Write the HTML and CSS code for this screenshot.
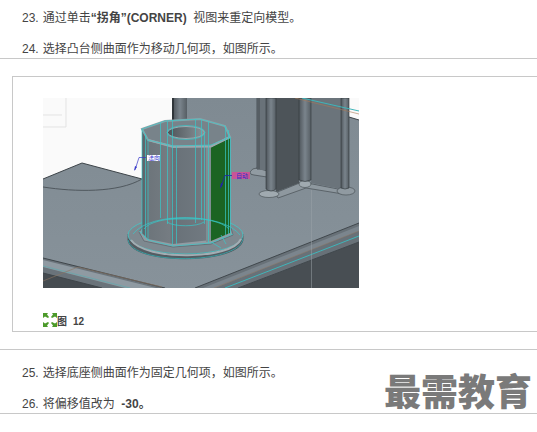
FILE: index.html
```
<!DOCTYPE html>
<html lang="zh-CN">
<head>
  <meta charset="UTF-8">
  <meta name="viewport" content="width=device-width, initial-scale=1">
  <title>重定向模型</title>
  <link rel="stylesheet" href="styles.css">
</head>
<body>
  <main>
    <ol class="steps" start="23">
      <li><span class="num">23.</span><p>通过单击<b>“拐角”(CORNER)</b>&nbsp; 视图来重定向模型。</p></li>
      <li><span class="num">24.</span><p>选择凸台侧曲面作为移动几何项，如图所示。</p></li>
    </ol>

    <figure class="figure">
      <svg class="model" viewBox="43 98 316 190" role="img" aria-label="凸台侧曲面">
        <defs>
          <linearGradient id="tube">
            <stop offset="0" stop-color="#4f565c"/>
            <stop offset=".5" stop-color="#7a848c"/>
            <stop offset="1" stop-color="#565e64"/>
          </linearGradient>
          <linearGradient id="boss">
            <stop offset="0" stop-color="#596167"/>
            <stop offset=".1" stop-color="#6d757b"/>
            <stop offset=".4" stop-color="#757c82"/>
            <stop offset=".45" stop-color="#697178"/>
            <stop offset="1" stop-color="#727b82"/>
          </linearGradient>
          <linearGradient id="hole">
            <stop offset="0" stop-color="#4c5358"/>
            <stop offset="1" stop-color="#8b949a"/>
          </linearGradient>
          <linearGradient id="top" x1="0" y1="0" x2="0" y2="1">
            <stop offset="0" stop-color="#7f8a92"/>
            <stop offset="1" stop-color="#87929a"/>
          </linearGradient>
        </defs>
        <rect x="43" y="98" width="316" height="190" fill="#fafafa"/>
        <path d="M66 98V127H43M43 115H62" fill="none" stroke="#e3e3e3"/>

        <!-- plate and back wall -->
        <path d="M43 179L82 163L142 179L173 180V98H349V117L359 120V288H43Z" fill="url(#top)"/>
        <path d="M43 179L82 163L142 179M349 117L359 120" fill="none" stroke="#3d4449"/>
        <path d="M43 187C75 192 118 193 142 179" fill="none" stroke="#50585e"/>
        <rect x="173" y="98" width="14" height="28" fill="url(#tube)"/>
        <path d="M173 98V126" stroke="#30363a" stroke-width="2"/>

        <!-- front edges -->
        <path d="M43 258L165 288H43Z" fill="#6a737a"/>
        <path d="M43 260L156 288H125L43 267Z" fill="#8f9aa2"/>
        <path d="M43 273L102 288H43Z" fill="#454b50"/>
        <path d="M43 258L165 288M43 273L102 288" stroke="#3f464b"/>
        <path d="M43 266L130 288" stroke="#5fa9ae" stroke-width=".7"/>
        <path d="M43 281L78 267L162 287" fill="none" stroke="#8d7561" stroke-width=".6"/>
        <path d="M195 288L359 223V242L238 288Z" fill="#687178"/>
        <path d="M203 288L359 226V231L215 288Z" fill="#7b858d"/>
        <path d="M238 288L359 242V288Z" fill="#484e53"/>
        <path d="M195 288L359 223M238 288L359 242" stroke="#41484d"/>
        <path d="M225 288L359 236" stroke="#3fb5b9"/>
        <path d="M214 288L359 231" stroke="#8d7561" stroke-width=".5"/>
        <path d="M311.500 190V288" stroke="#9ba3a9" stroke-width=".5"/>

        <!-- rib -->
        <path d="M250 172Q252 168 257 168L267 171V177L254 175Q250 175 250 172" fill="#919ba2" stroke="#394045" stroke-width=".6"/>
        <path d="M275 193L302 182L343 190V194L306 188L278 198Z" fill="#8e989f" stroke="#3c4348" stroke-width=".6"/>
        <rect x="257" y="98" width="9" height="72" fill="#697279"/>
        <path d="M276 98H299V183L276 192Z" fill="#4d5459"/>
        <path d="M311 98H341V189L311 183Z" fill="#6b747b"/>
        <path d="M257 98V169M259 98V169" stroke="#343b40" stroke-width=".7"/>
        <ellipse cx="269" cy="194" rx="10" ry="3.500" fill="#a0aab0" stroke="#42494e" stroke-width=".6"/>
        <ellipse cx="305" cy="184" rx="6" ry="3.500" fill="#a0aab0" stroke="#42494e" stroke-width=".6"/>
        <ellipse cx="346" cy="191" rx="9" ry="4" fill="#909aa1" stroke="#42494e" stroke-width=".6"/>
        <path d="M266 98H276V189Q271 193 266 189Z" fill="url(#tube)" stroke="#30373b" stroke-width=".6"/>
        <path d="M299 98H311V180Q305 183 299 180Z" fill="url(#tube)" stroke="#30373b" stroke-width=".6"/>
        <path d="M341 98H349V188Q345 190 341 188Z" fill="url(#tube)" stroke="#30373b" stroke-width=".6"/>
        <path d="M302 98L359 111" stroke="#3fb5b9"/>
        <path d="M295 98L359 114" stroke="#a97b58" stroke-width=".6"/>

        <!-- boss flange -->
        <path d="M128 234V240C130 265 239 265 243 240V234Z" fill="#555c62" stroke="#353c40" stroke-width=".6"/>
        <ellipse cx="185.500" cy="235" rx="57.500" ry="19" fill="#7e8990" stroke="#41c9c9" stroke-width=".8"/>
        <path d="M131 240C145 261 232 260 241 239" fill="none" stroke="#a3adb3" stroke-width="2"/>
        <path d="M128 240C132 265 238 265 243 239" fill="none" stroke="#36aeb2" stroke-width=".8"/>

        <!-- boss body -->
        <path d="M139 232L142 228H231L233 235L211 244L173 247L144 241Z" fill="#929ba2" stroke="#50585e" stroke-width=".6"/>
        <path d="M142 129L148 140L173 146L211 146V240L173 244L148 239L142 233Z" fill="url(#boss)"/>
        <path d="M211 146L230 137V233L211 241Z" fill="#1b6423"/>
        <path d="M206 147H211V241L206 242Z" fill="#7f8e93"/>
        <path d="M142 129L165 121L200 119L225 126L230 137L211 146L173 147L148 140Z" fill="#78838a" stroke="#939fa5" stroke-width="2"/>
        <path d="M148 140L173 146.500H211L230 137" fill="none" stroke="#9da7ad" stroke-width="2"/>
        <ellipse cx="186" cy="132.500" rx="18.500" ry="6" fill="url(#hole)" stroke="#a0a9af"/>
        <g fill="none" stroke="#38c9ca" stroke-width=".7">
          <path d="M142 129L165 121L200 119L225 126L230 137L211 145L173 146L148 140Z"/>
          <ellipse cx="186" cy="132.500" rx="19" ry="7"/>
          <path d="M142 129V233M145.500 134V238M148 140V240M160.500 123V218M167.500 121V224M172.500 120V245M176.500 146V244M195.500 119V223M201.500 120V220M204.500 132V224M208.500 122V243M225.500 126V235M228.500 130V234M230.500 137V234"/>
          <path d="M139 231L148 240L173 246L211 243L233 234M144 229C153 215 216 214 229 229M167 222C174 227 197 227 204 222M169 219H200M133 234C150 211 224 213 240 235M211 242L221 248M221 235L226 244"/>
        </g>

        <!-- labels -->
        <path d="M146 157.500H139L135 170" fill="none" stroke="#3838c8" stroke-width=".7"/>
        <path d="M134 171L135 166L137 167Z" fill="#3838c8"/>
        <rect x="147" y="155" width="13" height="6" fill="#fff"/>
        <text class="tag" x="148" y="160">法向</text>
        <path d="M232 175.500H225L221 187" fill="none" stroke="#2020b0" stroke-width=".8"/>
        <path d="M220 189L221 183L223 184Z" fill="#2020b0"/>
        <rect x="232" y="172" width="18" height="7" fill="#c95596"/>
        <text class="tag" x="236" y="178">自动</text>
      </svg>
      <figcaption>
        <svg class="expand" viewBox="0 0 14 14" aria-hidden="true">
          <path d="M0 0H5L4 1.500L6 4L5 5L2 3.500L0 5ZM14 0V5L12 3.500L9 5L8 4L10 1.500L9 0ZM0 14V9L2 10.500L5 9L6 10L4 12.500L5 14ZM14 14H9L10 12.500L8 10L9 9L12 10.500L14 9Z"/>
        </svg><span class="fig">图</span><span class="fig-num">12</span>
      </figcaption>
    </figure>

    <ol class="steps steps-after" start="25">
      <li><span class="num">25.</span><p>选择底座侧曲面作为固定几何项，如图所示。</p></li>
      <li><span class="num">26.</span><p>将偏移值改为&nbsp; <b>-30。</b></p></li>
    </ol>
    <div class="watermark">最需教育</div>
  </main>
</body>
</html>
```

FILE: styles.css
```
body {
  margin: 0;
  background: #fff;
  color: #444;
  font-family: "Liberation Sans", "Noto Sans CJK SC", sans-serif;
  font-size: 12px;
  line-height: 18px;
}

main {
  position: relative;
}

.steps {
  display: flex;
  flex-direction: column;
  gap: 13px;
  margin: 0;
  padding: 9px 0 0 22px;
  list-style: none;
  border-bottom: 1px solid #c8c8c8;
}

.steps li {
  display: flex;
  gap: 4px;
}

.steps p {
  margin: 0;
}

.figure {
  margin: 17px 0 17px 12px;
  padding: 21px 0 0 30px;
  border: 1px solid #c8c8c8;
  border-right: none;
}

.model {
  display: block;
  width: 316px;
  max-width: 100%;
}

.tag {
  fill: #3030cc;
  font-size: 6px;
}

figcaption {
  display: flex;
  align-items: flex-end;
  margin-top: 25px;
  font-size: 10px;
  font-weight: bold;
}

.expand {
  width: 14px;
  height: 14px;
  margin-bottom: 4px;
  fill: #4c9a2a;
}

.fig-num {
  margin-left: 6px;
}

.steps-after {
  padding-top: 14px;
  border-top: 1px solid #c8c8c8;
}

.watermark {
  position: absolute;
  right: 5px;
  bottom: 0;
  color: #7a7a7a;
  font-size: 37px;
  font-weight: 900;
  line-height: 40px;
}
```
